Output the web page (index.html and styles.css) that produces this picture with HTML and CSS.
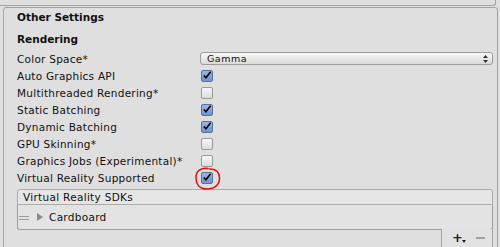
FILE: index.html
```html
<!DOCTYPE html>
<html>
<head>
    <title>Other Settings</title>
    <link rel="stylesheet" href="styles.css">
</head>
<body>
    <div class="prev-section"></div>

    <div class="panel">
        <div class="panel-title">Other Settings</div>
        <div class="group-title">Rendering</div>

        <div class="row">
            <span class="label">Color Space*</span>
            <div class="dropdown">
                <span>Gamma</span>
                <span class="dropdown-arrows">
                    <svg width="5" height="8" viewBox="0 0 5 8"><path d="M2.5 0 L5 3 L0 3 Z M0 5 L5 5 L2.5 8 Z" fill="#333"/></svg>
                </span>
            </div>
        </div>
        <div class="row">
            <span class="label">Auto Graphics API</span>
            <span class="checkbox checked"><svg width="11" height="11" viewBox="0 0 11 11"><path d="M2 5.5 L4.3 8 L9.5 1.5" fill="none" stroke="#000" stroke-width="1.8"/></svg></span>
        </div>
        <div class="row">
            <span class="label">Multithreaded Rendering*</span>
            <span class="checkbox"></span>
        </div>
        <div class="row">
            <span class="label">Static Batching</span>
            <span class="checkbox checked"><svg width="11" height="11" viewBox="0 0 11 11"><path d="M2 5.5 L4.3 8 L9.5 1.5" fill="none" stroke="#000" stroke-width="1.8"/></svg></span>
        </div>
        <div class="row">
            <span class="label">Dynamic Batching</span>
            <span class="checkbox checked"><svg width="11" height="11" viewBox="0 0 11 11"><path d="M2 5.5 L4.3 8 L9.5 1.5" fill="none" stroke="#000" stroke-width="1.8"/></svg></span>
        </div>
        <div class="row">
            <span class="label">GPU Skinning*</span>
            <span class="checkbox"></span>
        </div>
        <div class="row">
            <span class="label">Graphics Jobs (Experimental)*</span>
            <span class="checkbox"></span>
        </div>
        <div class="row">
            <span class="label">Virtual Reality Supported</span>
            <span class="checkbox checked">
                <svg width="11" height="11" viewBox="0 0 11 11"><path d="M2 5.5 L4.3 8 L9.5 1.5" fill="none" stroke="#000" stroke-width="1.8"/></svg>
                <svg class="red-mark" width="30" height="26" viewBox="0 0 30 26">
                    <path d="M15 2.5 C8 1.5 3 5 3 11.5 C3 18.5 7 23 14 23 C21.5 23 26.5 19 26.5 12 C26.5 6 23 3 16.5 3" fill="none" stroke="#e0100c" stroke-width="1.5" stroke-linecap="round"/>
                </svg>
            </span>
        </div>

        <div class="sdk-list">
            <div class="sdk-header">Virtual Reality SDKs</div>
            <div class="sdk-body">
                <div class="sdk-item">
                    <span class="handle"></span>
                    <span class="foldout"></span>
                    <span>Cardboard</span>
                </div>
            </div>
            <div class="sdk-footer">
                <span class="add-btn">+<span class="add-arrow"></span></span>
                <span class="remove-btn"></span>
            </div>
        </div>
    </div>
</body>
</html>
```

FILE: styles.css
```css
html,
body {
    height: 247px;
    overflow: hidden;
}

body {
    margin: 0;
    background-color: #dfdfdf;
    font-family: "DejaVu Sans", Verdana, sans-serif;
    font-size: 10.5px;
    color: #111;
}

.prev-section {
    height: 5px;
    width: 496px;
    margin-left: -2px;
    border: 1px solid #a3a3a3;
    border-top: none;
    border-radius: 0 0 3px 3px;
}

.panel {
    margin: 1px 0 0 3px;
    width: 476px;
    height: 240px;
    padding: 2px 4px 0 13px;
    border: 1px solid #a3a3a3;
    border-radius: 3px;
}

.panel-title {
    font-weight: bold;
    font-size: 10.5px;
    line-height: 14px;
}

.group-title {
    font-weight: bold;
    font-size: 10.5px;
    line-height: 14px;
    margin-top: 8px;
    margin-bottom: 4px;
}

.row {
    display: flex;
    align-items: center;
    height: 17px;
}

.label {
    width: 183px;
    flex-shrink: 0;
    letter-spacing: 0.25px;
}

.dropdown {
    flex: 1;
    height: 11px;
    display: flex;
    align-items: center;
    justify-content: space-between;
    padding: 0 4px 0 6px;
    border: 1px solid #9c9c9c;
    border-radius: 3px;
    background: linear-gradient(#f8f8f8, #dadada);
    font-size: 9.5px;
    letter-spacing: 0.5px;
}

.dropdown-arrows {
    display: flex;
}

.checkbox {
    position: relative;
    margin-left: 1px;
    width: 10px;
    height: 10px;
    border: 1px solid #9a9a9a;
    border-radius: 2px;
    background: linear-gradient(#f7f7f7, #dcdcdc);
    display: flex;
}

.checkbox.checked {
    border-color: #58709a;
    background: linear-gradient(#9db6e0, #7094cc);
}

.checkbox svg {
    margin: -1px 0 0 0;
}

.red-mark {
    position: absolute;
    left: -9px;
    top: -6px;
}

.sdk-list {
    margin-top: 3px;
}

.sdk-header {
    height: 14px;
    line-height: 14px;
    padding-left: 5px;
    border: 1px solid #ababab;
    border-radius: 3px 3px 0 0;
    background-color: #e6e6e6;
    letter-spacing: 0.3px;
}

.sdk-body {
    height: 24px;
    border: 1px solid #9e9e9e;
    border-top: none;
    border-radius: 0 0 3px 3px;
    background-color: #e3e3e3;
    display: flex;
    align-items: center;
}

.sdk-item {
    display: flex;
    align-items: center;
    letter-spacing: 0.3px;
    padding-bottom: 1px;
}

.handle {
    width: 10px;
    height: 2px;
    margin-left: 1px;
    border-top: 1px solid #9a9a9a;
    border-bottom: 1px solid #9a9a9a;
    margin-top: 3px;
}

.foldout {
    width: 0;
    height: 0;
    margin: 0 6px 0 8px;
    border-top: 4px solid transparent;
    border-bottom: 4px solid transparent;
    border-left: 6px solid #8a8a8a;
}

.sdk-footer {
    width: 52px;
    height: 20px;
    margin: -1px 0 0 auto;
    border: 1px solid #a5a5a5;
    border-top: none;
    border-radius: 0 0 3px 3px;
    background-color: #e2e2e2;
    display: flex;
    align-items: flex-start;
    gap: 12px;
    padding-left: 10px;
    box-sizing: border-box;
}

.add-btn {
    position: relative;
    font-size: 13px;
    font-weight: bold;
    line-height: 17px;
    color: #222;
}

.add-arrow {
    position: absolute;
    right: -3px;
    top: 11px;
    border-left: 2px solid transparent;
    border-right: 2px solid transparent;
    border-top: 3px solid #222;
}

.remove-btn {
    width: 9px;
    height: 2px;
    margin-top: 8px;
    margin-left: 1px;
    background-color: #9e9e9e;
}
```
